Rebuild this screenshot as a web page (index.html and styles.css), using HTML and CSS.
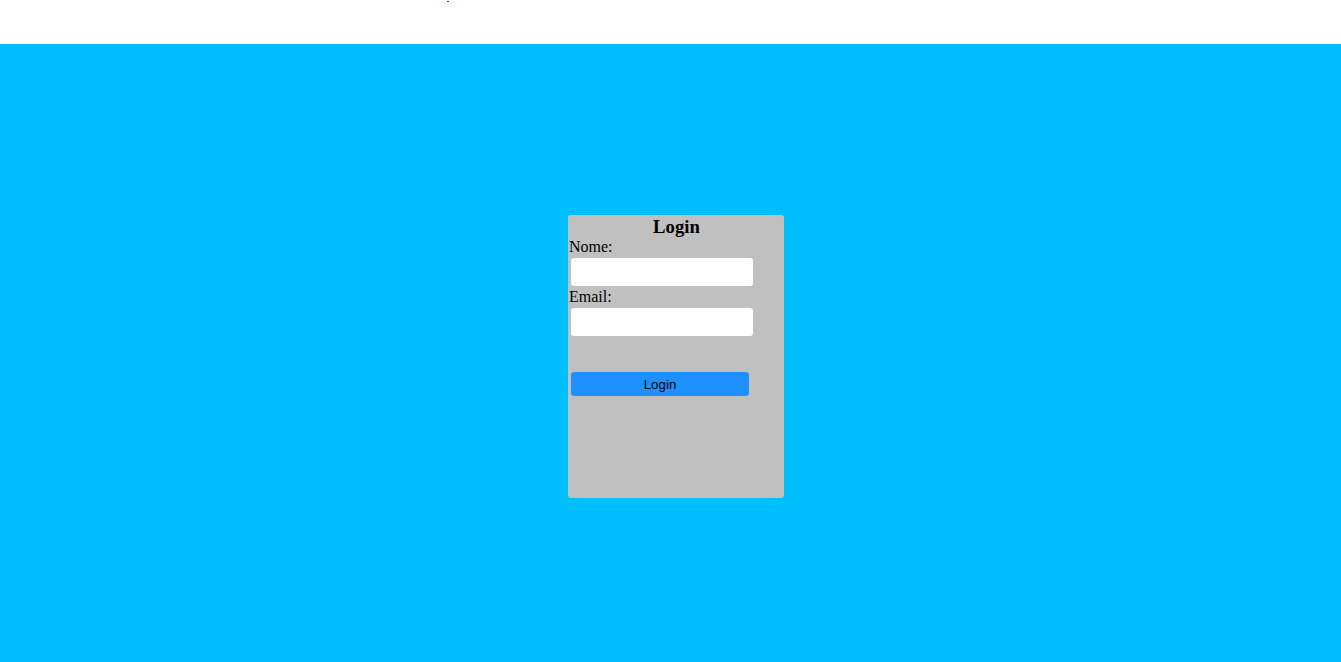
FILE: index.html
```html
<!DOCTYPE html>
<html lang="pt">
<head>
<meta charset="utf-8">
<title>Login</title>
<link rel="stylesheet" href="styles.css">
</head>
<body>
<header class="topbar"><span class="dot"></span></header>
<main class="stage">
  <form class="card">
    <h3 class="title">Login</h3>
    <label class="label" for="nome">Nome:</label>
    <input class="field" id="nome" type="text">
    <label class="label" for="email">Email:</label>
    <input class="field" id="email" type="text">
    <button class="btn" type="button">Login</button>
  </form>
</main>
</body>
</html>
```
FILE: styles.css
```css
html, body {
  margin: 0;
  padding: 0;
}
body {
  font-family: "Liberation Serif", "Times New Roman", serif;
  font-size: 16px;
  background: #00bfff;
  height: 662px;
  overflow: hidden;
}
.topbar {
  height: 44px;
  background: #fff;
  position: relative;
}
.dot {
  position: absolute;
  left: 447px;
  top: 1px;
  width: 2px;
  height: 1px;
  background: #ff0000;
}
.stage {
  padding: 171px 0 0 568px;
}
.card {
  width: 216px;
  height: 283px;
  background: #c0c0c0;
  border-radius: 3px;
  display: flex;
  flex-direction: column;
  align-items: flex-start;
  box-sizing: border-box;
}
.title {
  align-self: stretch;
  text-align: center;
  margin: 0 0 -1px;
  font-size: 18.72px;
  font-weight: bold;
  line-height: 22px;
  padding: 1px 0 0 1px;
}
.label {
  display: block;
  line-height: 18px;
  padding: 1px 0 0 1px;
  margin-bottom: -1px;
}
.field {
  width: 182px;
  height: 28px;
  box-sizing: border-box;
  border: none;
  border-radius: 3px;
  background: #fff;
  margin: 3px 0 1px 3px;
  padding: 0;
}
.btn {
  margin: 35px 0 0 3px;
  width: 178px;
  height: 24px;
  border: none;
  border-radius: 3px;
  background: #1e90ff;
  color: #000;
  font-family: "Liberation Sans", Arial, sans-serif;
  font-size: 13.33px;
  padding: 0;
}
```
